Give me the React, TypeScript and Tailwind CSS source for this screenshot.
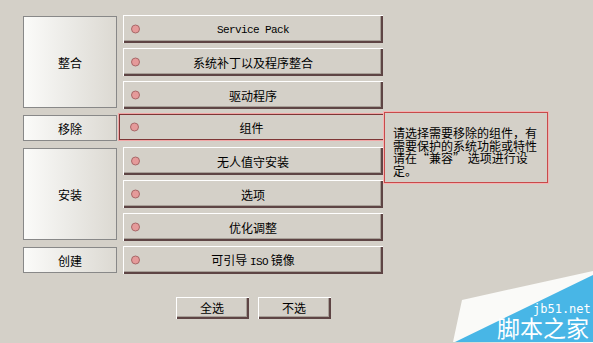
import React from "react";

const cjk = { fontFamily: '"Noto Sans CJK SC", "Liberation Sans", sans-serif' };
const mono = { fontFamily: '"Liberation Mono", "Noto Sans CJK SC", monospace', fontSize: "11px", letterSpacing: "-0.6px" };

function Dot() {
  return (
    <span className="absolute left-[8px] top-1/2 -translate-y-1/2 w-[9px] h-[9px] rounded-full bg-[#e59a9a] border border-[#a86868]" />
  );
}

function Btn({ children, isMono = false }: { children: React.ReactNode; isMono?: boolean }) {
  return (
    <div className="relative h-[28px] w-[260px] bg-[#d4d0c8] shadow-[inset_1px_1px_0_#ffffff,inset_-2px_-2px_0_#5e4444,inset_-3px_-3px_0_#a8a098] flex items-center justify-center">
      <Dot />
      <span className="text-[12px] leading-none text-black translate-y-[1px]" style={isMono ? mono : cjk}>
        {children}
      </span>
    </div>
  );
}

function SelBtn({ children }: { children: React.ReactNode }) {
  return (
    <div className="relative h-[28px] w-[267px] -ml-[5px] -mt-[1px] mb-[1px] mr-[-2px] bg-[#d4d0c8] border border-[#f2a6a6] flex items-center justify-center">
      <div className="absolute inset-0 border border-[#7e3636]" />
      <span className="absolute left-[11px] top-1/2 -translate-y-1/2 w-[9px] h-[9px] rounded-full bg-[#e59a9a] border border-[#a86868]" />
      <span className="text-[12px] leading-none text-black translate-y-[1px]" style={cjk}>
        {children}
      </span>
    </div>
  );
}

function Label({ children, h }: { children: React.ReactNode; h: string }) {
  return (
    <div
      className={`${h} my-[1px] w-[94px] border border-[#888888] bg-gradient-to-r from-[#fbfbf9] via-[#ebeae6] to-[#dcd9d2] flex items-center justify-center`}
    >
      <span className="text-[12px] leading-none text-black translate-y-[1px]" style={cjk}>
        {children}
      </span>
    </div>
  );
}

function SmallBtn({ children }: { children: React.ReactNode }) {
  return (
    <div className="h-[22px] w-[73px] bg-[#d4d0c8] shadow-[inset_1px_1px_0_#ffffff,inset_-2px_-2px_0_#5e4444,inset_-3px_-3px_0_#a8a098] flex items-center justify-center">
      <span className="text-[12px] leading-none text-black" style={cjk}>
        {children}
      </span>
    </div>
  );
}

export default function App() {
  return (
    <div className="relative w-[593px] h-[343px] bg-[#d4d0c8] overflow-hidden">
      <div className="pt-[15px] pl-[23px] flex flex-col">
        <div className="flex flex-col gap-[5px]">
          <div className="flex gap-[6px]">
            <Label h="h-[92px]">整合</Label>
            <div className="flex flex-col gap-[5px]">
              <Btn isMono>Service Pack</Btn>
              <Btn>系统补丁以及程序整合</Btn>
              <Btn>驱动程序</Btn>
            </div>
          </div>
          <div className="flex gap-[6px]">
            <Label h="h-[26px]">移除</Label>
            <div className="flex flex-col">
              <SelBtn>组件</SelBtn>
            </div>
          </div>
          <div className="flex gap-[6px]">
            <Label h="h-[92px]">安装</Label>
            <div className="flex flex-col gap-[5px]">
              <Btn>无人值守安装</Btn>
              <Btn>选项</Btn>
              <Btn>优化调整</Btn>
            </div>
          </div>
          <div className="flex gap-[6px]">
            <Label h="h-[26px]">创建</Label>
            <Btn>
              可引导 <span style={mono}>ISO</span> 镜像
            </Btn>
          </div>
        </div>
        <div className="ml-[100px] w-[260px] mt-[23px] flex justify-center gap-[9px]">
          <SmallBtn>全选</SmallBtn>
          <SmallBtn>不选</SmallBtn>
        </div>
      </div>

      <div className="absolute left-[384px] top-[112px] w-[164px] h-[71px] border border-[#c84a4a] shadow-[0_0_0_1px_#f4b4b4] bg-[#d4d0c8] pl-[8px] pt-[14px]">
        <div className="text-[12px] leading-[12.5px] text-black whitespace-nowrap" style={cjk}>
          <div>请选择需要移除的组件，有</div>
          <div>需要保护的系统功能或特性</div>
          <div>请在“兼容” 选项进行设</div>
          <div>定。</div>
        </div>
      </div>

      <svg className="absolute left-0 top-0" width="593" height="343" viewBox="0 0 593 343">
        <polygon points="453,342 462,300 593,271 593,343" fill="#fafaf8" />
        <polygon points="455,342 593,275 593,342" fill="#48b6e6" />
      </svg>
      <div
        className="absolute left-[533px] top-[303px] text-[12px] leading-none text-white whitespace-nowrap"
        style={{ fontFamily: '"DejaVu Sans Mono", monospace' }}
      >
        jb51.net
      </div>
      <div className="absolute left-[497px] top-[316px] text-[23px] leading-none text-white whitespace-nowrap" style={cjk}>
        脚本之家
      </div>
    </div>
  );
}
